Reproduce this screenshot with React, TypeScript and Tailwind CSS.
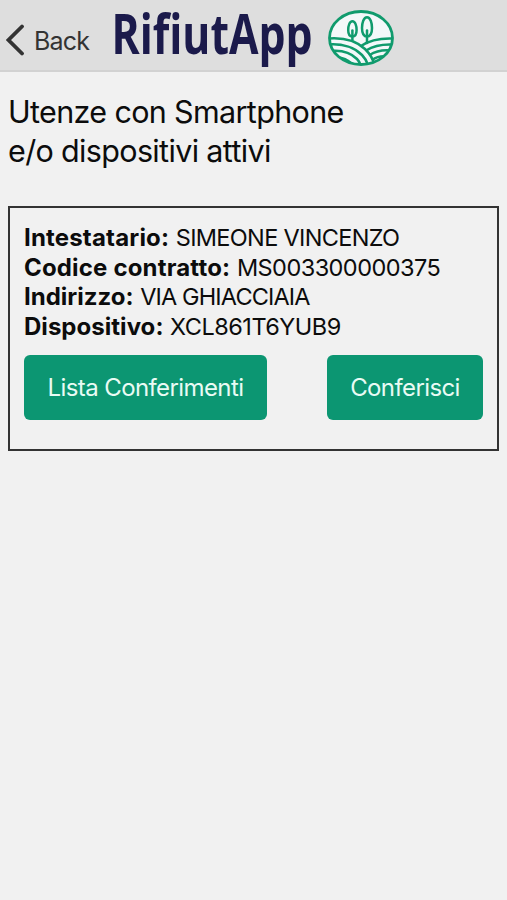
import React from "react";

interface Utenza {
  intestatario: string;
  codiceContratto: string;
  indirizzo: string;
  dispositivo: string;
}

const utenza: Utenza = {
  intestatario: "SIMEONE VINCENZO",
  codiceContratto: "MS003300000375",
  indirizzo: "VIA GHIACCIAIA",
  dispositivo: "XCL861T6YUB9",
};

const BackIcon = () => (
  <svg width="18" height="32" viewBox="0 0 18 32" fill="none">
    <path
      d="M16 2.5 2.5 16 16 29.5"
      stroke="#333333"
      strokeWidth="3.8"
      strokeLinecap="round"
      strokeLinejoin="miter"
    />
  </svg>
);

// Wordmark, condensed to the width of the brand lettering
const Wordmark = () => (
  <svg
    width="202"
    height="70"
    viewBox="0 0 202 70"
    role="img"
    className="overflow-visible"
  >
    <text
      x="-0.5"
      y="54"
      textLength="201"
      lengthAdjust="spacingAndGlyphs"
      fill="#1b1a4b"
      className="font-['Open_Sans'] text-[55px] font-bold"
    >
      RifiutApp
    </text>
  </svg>
);

const Emblem = () => (
  <svg width="66" height="56" viewBox="0 0 66 56" fill="none">
    <defs>
      <clipPath id="emblem-oval">
        <ellipse cx="33" cy="28" rx="32" ry="27" />
      </clipPath>
    </defs>
    <ellipse cx="33" cy="28" rx="31.5" ry="26.5" fill="#f3f8f9" />
    <g stroke="#109b6d" strokeWidth="2.5" clipPath="url(#emblem-oval)">
      <path d="M1 28.5C16 27.5 29 31.5 37 39C42 44 45 49 46 54" />
      <path d="M1 34.5C15 33.5 27 38 34 45C37 48 39 52 40 55" />
      <path d="M3 41C14 40 23 43 29 49C31 51 32 53 33 56" />
      <path d="M8 47.5C14 47 19 49 24 54" />
      <path d="M33 36C41 30.5 52 28 65 28.5" />
      <path d="M38 40.5C45 36 54 34 65 34.5" />
      <path d="M41.5 45C48 41 55 39.5 63 40.5" />
      <path d="M44 50C49 46.5 54 46 59 46.5" />
    </g>
    <g stroke="#109b6d" strokeWidth="2.5" strokeLinecap="round">
      <path d="M24.4 11.3C21.5 11.3 20.2 16 20.2 20C20.2 24 21.8 26.5 24.4 26.5C27 26.5 28.6 24 28.6 20C28.6 16 27.3 11.3 24.4 11.3Z" />
      <path d="M24.4 20.5V29.5" />
      <path d="M39 7.2C35.6 7.2 34 13 34 18C34 23.5 35.9 26.5 39 26.5C42.1 26.5 44 23.5 44 18C44 13 42.4 7.2 39 7.2Z" />
      <path d="M39 20.5V33" />
    </g>
    <ellipse
      cx="33"
      cy="28"
      rx="31.5"
      ry="26.5"
      stroke="#109b6d"
      strokeWidth="2.8"
    />
  </svg>
);

interface FieldProps {
  label: string;
  value: string;
  labelClass: string;
  valueClass: string;
}

const Field = ({ label, value, labelClass, valueClass }: FieldProps) => (
  <p className="whitespace-nowrap">
    <strong className={`text-[24px] leading-none font-bold ${labelClass}`}>
      {label}:
    </strong>{" "}
    <span className={valueClass}>{value}</span>
  </p>
);

const App = () => {
  return (
    <div className="min-h-screen bg-[#f1f1f1] font-['Inter',sans-serif] text-[#0c0c0c]">
      <header className="flex h-[72px] items-start border-b-2 border-[#d2d2d2] bg-[#dedede]">
        <button className="flex h-[70px] w-[112px] shrink-0 items-center gap-2.5 pt-2.5 pl-1.5 text-[#333333]">
          <BackIcon />
          <span className="pt-[3px] text-[25px] leading-none tracking-[-0.8px]">
            Back
          </span>
        </button>
        <Wordmark />
        <div className="pt-[10px] pl-[14px]">
          <Emblem />
        </div>
      </header>

      <main className="px-2 pt-[20px]">
        <h1 className="text-[30.5px] leading-[39px] tracking-[-0.65px]">
          Utenze con Smartphone
          <br />
          e/o dispositivi attivi
        </h1>

        <section className="mt-[36px] h-[245px] border-2 border-[#333333] px-3.5 pt-[15px]">
          <div className="text-[23.5px] leading-[29.5px]">
            <Field
              label="Intestatario"
              value={utenza.intestatario}
              labelClass="tracking-[0.18px]"
              valueClass="tracking-[-0.68px]"
            />
            <Field
              label="Codice contratto"
              value={utenza.codiceContratto}
              labelClass="tracking-[0.17px]"
              valueClass="tracking-[-0.55px]"
            />
            <Field
              label="Indirizzo"
              value={utenza.indirizzo}
              labelClass="tracking-[0px]"
              valueClass="tracking-[-0.85px]"
            />
            <Field
              label="Dispositivo"
              value={utenza.dispositivo}
              labelClass="tracking-[0.03px]"
              valueClass="tracking-[-0.5px]"
            />
          </div>
          <div className="mt-[14px] flex justify-between text-[24px] tracking-[-0.6px] text-[#e9fbf4]">
            <button className="h-[65px] w-[243px] rounded-md bg-[#0c9672]">
              Lista Conferimenti
            </button>
            <button className="h-[65px] w-[156px] rounded-md bg-[#0c9672]">
              Conferisci
            </button>
          </div>
        </section>
      </main>
    </div>
  );
};

export default App;
